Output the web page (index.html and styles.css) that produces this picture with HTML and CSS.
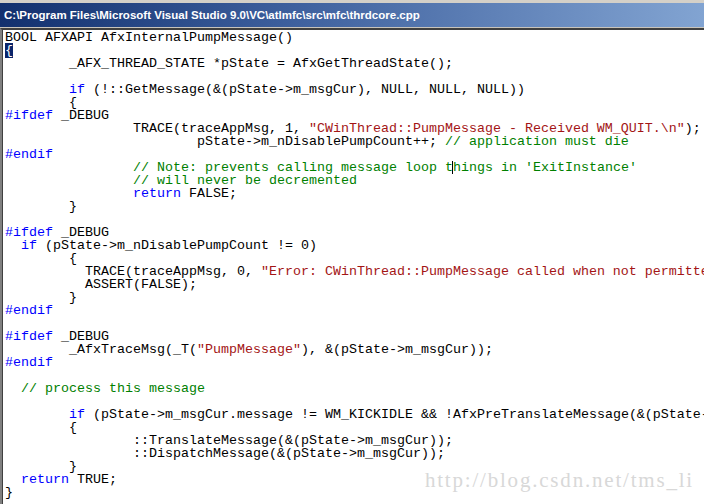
FILE: index.html
```html
<!DOCTYPE html>
<html lang="en">
<head>
<meta charset="UTF-8">
<title>thrdcore.cpp</title>
<link rel="stylesheet" href="styles.css">
</head>
<body>
<div class="window">
  <div class="titlebar">C:\Program Files\Microsoft Visual Studio 9.0\VC\atlmfc\src\mfc\thrdcore.cpp</div>
  <div class="editor">
<pre class="code">BOOL AFXAPI AfxInternalPumpMessage()
<span class="sel">{</span>
        _AFX_THREAD_STATE *pState = AfxGetThreadState();

        <span class="kw">if</span> (!::GetMessage(&amp;(pState-&gt;m_msgCur), NULL, NULL, NULL))
        {
<span class="kw">#ifdef</span> _DEBUG
                TRACE(traceAppMsg, 1, <span class="str">"CWinThread::PumpMessage - Received WM_QUIT.\n"</span>);
                        pState-&gt;m_nDisablePumpCount++; <span class="cm">// application must die</span>
<span class="kw">#endif</span>
                <span class="cm">// Note: prevents calling message loop t<span class="caret"></span>hings in 'ExitInstance'</span>
                <span class="cm">// will never be decremented</span>
                <span class="kw">return</span> FALSE;
        }

<span class="kw">#ifdef</span> _DEBUG
  <span class="kw">if</span> (pState-&gt;m_nDisablePumpCount != 0)
        {
          TRACE(traceAppMsg, 0, <span class="str">"Error: CWinThread::PumpMessage called when not permitted.\n"</span>);
          ASSERT(FALSE);
        }
<span class="kw">#endif</span>

<span class="kw">#ifdef</span> _DEBUG
        _AfxTraceMsg(_T(<span class="str">"PumpMessage"</span>), &amp;(pState-&gt;m_msgCur));
<span class="kw">#endif</span>

  <span class="cm">// process this message</span>

        <span class="kw">if</span> (pState-&gt;m_msgCur.message != WM_KICKIDLE &amp;&amp; !AfxPreTranslateMessage(&amp;(pState-&gt;m_msgCur)))
        {
                ::TranslateMessage(&amp;(pState-&gt;m_msgCur));
                ::DispatchMessage(&amp;(pState-&gt;m_msgCur));
        }
  <span class="kw">return</span> TRUE;
}</pre>
    <div class="watermark">http://blog.csdn.net/tms_li</div>
  </div>
</div>
</body>
</html>
```

FILE: styles.css
```css
html, body {
  margin: 0;
  padding: 0;
  background: #fff;
}
.window {
  width: 704px;
  height: 504px;
  overflow: hidden;
  background: #d4d0c8;
  padding-top: 3px;
  box-sizing: border-box;
  display: flex;
  flex-direction: column;
}
.titlebar {
  height: 24px;
  line-height: 25px;
  padding-left: 4px;
  color: #fff;
  font-family: "Liberation Sans", Arial, sans-serif;
  font-weight: bold;
  font-size: 11.5px;
  white-space: nowrap;
  background: linear-gradient(to right, #12306e, #3c5e9c 40%, #82a4d2);
  border-bottom: 1px solid #c8c4bc;
}
.editor {
  position: relative;
  flex: 1;
  background: #fff;
  border-top: 2px solid #404040;
  border-left: 2px solid #808080;
  box-shadow: inset 1px 0 0 #404040;
  overflow: hidden;
}
.code {
  margin: 0;
  padding: 1px 0 0 3px;
  font-family: "Liberation Mono", "Courier New", monospace;
  font-size: 13.333px;
  line-height: 13px;
  color: #000;
  white-space: pre;
}
.kw { color: #0000ff; }
.cm { color: #008000; }
.str { color: #a31515; }
.sel {
  background: #0a246a;
  color: #fff;
}
.caret {
  display: inline-block;
  width: 0;
  height: 13px;
  vertical-align: top;
  border-left: 1px solid #000;
  margin-left: -1px;
}
.watermark {
  position: absolute;
  right: 10px;
  bottom: 11px;
  font-family: "Liberation Serif", serif;
  font-size: 21px;
  letter-spacing: 1.8px;
  color: #d8d8d8;
}
```
